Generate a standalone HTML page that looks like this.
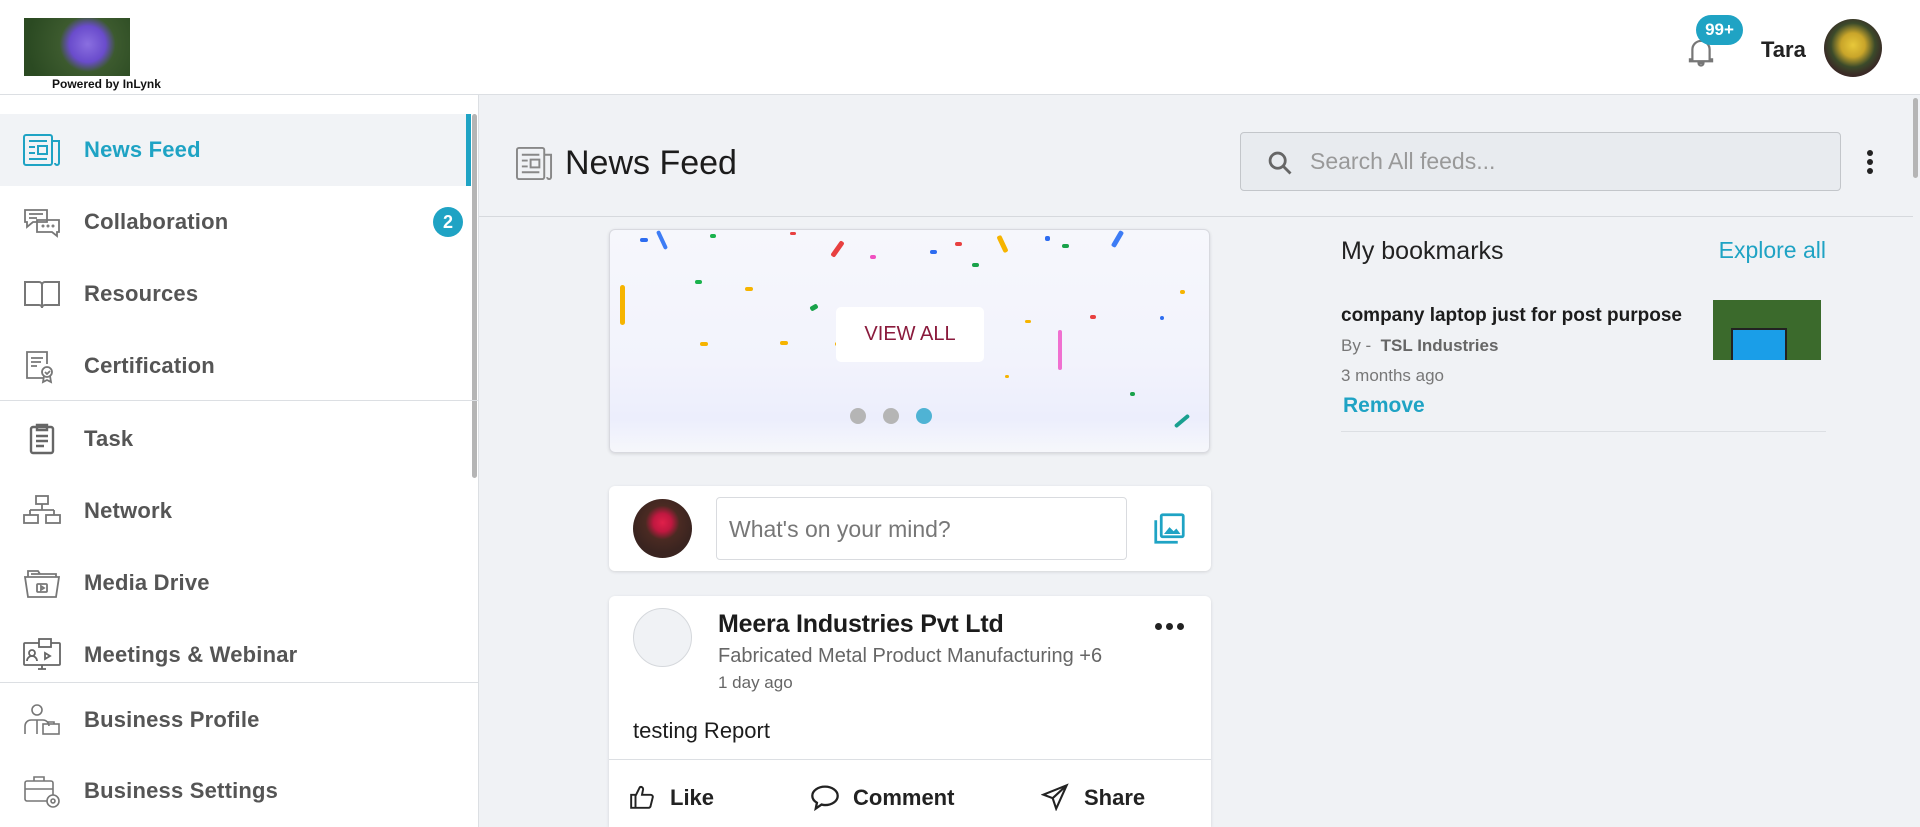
<!DOCTYPE html>
<html style="overflow:hidden;height:827px"><head><meta charset="utf-8"><style>
*{margin:0;padding:0;box-sizing:border-box}
body{width:1920px;height:827px;overflow:hidden;background:#f0f2f5;font-family:"Liberation Sans",sans-serif;position:relative;color:#222}
.a{position:absolute}
#hdr{left:0;top:0;width:1920px;height:95px;background:#fff;border-bottom:1px solid #dcdfe3}
#side{left:0;top:95px;width:479px;height:732px;background:#fff;border-right:1px solid #dcdfe3}
.item{position:absolute;left:0;width:470px;height:72px;display:flex;align-items:center}
.item .ic{position:absolute;left:23px;top:18px;width:38px;height:36px}
.item span{position:absolute;left:84px;font-size:22px;color:#555;font-weight:bold;letter-spacing:.2px}
.card{position:absolute;background:#fff;border-radius:6px;box-shadow:0 1px 3px rgba(0,0,0,.12)}
.conf{position:absolute;border-radius:2px}
</style></head><body>
<div id="hdr" class="a">
  <div class="a" style="left:24px;top:18px;width:106px;height:58px;background:radial-gradient(circle at 60% 45%,#8a6fe0 0,#6a4ccc 18px,#3c5a2e 28px,#2b4a22 60px)"></div>
  <div class="a" style="left:52px;top:77px;font-size:12px;font-weight:bold;color:#111">Powered by InLynk</div>
  <svg class="a" style="left:1686px;top:36px" width="30" height="32" viewBox="0 0 24 26"><path d="M5 19V11a7 7 0 0 1 14 0v8h2v1.5H3V19zM10 22h4a2 2 0 0 1-4 0z" fill="none" stroke="#777" stroke-width="1.8"/></svg>
  <div class="a" style="left:1696px;top:15px;width:47px;height:30px;border-radius:15px;background:#1fa3c4;color:#fff;font-size:17px;text-align:center;line-height:30px;font-weight:bold">99+</div>
  <div class="a" style="left:1761px;top:37px;font-size:22px;font-weight:bold;color:#222">Tara</div>
  <div class="a" style="left:1824px;top:19px;width:58px;height:58px;border-radius:50%;background:radial-gradient(circle at 50% 45%,#e8c83a 0,#c9a52a 12px,#3b4a2a 22px,#3a2a26 30px)"></div>
</div>
<div id="side" class="a">
  <div class="a" style="left:472px;top:19px;width:5px;height:364px;background:#b5b5b5;border-radius:3px"></div>
</div>
<div class="item" style="top:114px;background:#f1f3f6"><svg class="ic" viewBox="0 0 38 36" fill="none" stroke="#1fa3c4" stroke-width="2"><rect x="1" y="3" width="28" height="30" rx="2"/><path d="M29 9h7v22a2 2 0 0 1-4 0M6 9h18M6 15h6M6 21h6M6 27h18"/><rect x="15" y="14" width="9" height="8"/></svg><span style="color:#1fa3c4">News Feed</span><div class="a" style="left:466px;top:0;width:5px;height:72px;background:#1fa3c4"></div></div>
<div class="item" style="top:186px"><svg class="ic" viewBox="0 0 38 36" fill="none" stroke="#777" stroke-width="1.8"><path d="M2 6h22v12H10l-6 5v-5H2z"/><path d="M14 16h22v12h-2v4l-5-4H14z"/><path d="M6 10h14M6 14h8"/><circle cx="20" cy="22" r=".6"/><circle cx="25" cy="22" r=".6"/><circle cx="30" cy="22" r=".6"/></svg><span>Collaboration</span><div class="a" style="left:433px;top:21px;width:30px;height:30px;border-radius:50%;background:#1fa3c4;color:#fff;font-size:18px;text-align:center;line-height:30px;font-weight:bold">2</div></div>
<div class="item" style="top:258px"><svg class="ic" viewBox="0 0 38 36" fill="none" stroke="#777" stroke-width="2"><path d="M2 6h14a3 3 0 0 1 3 3v23a3 3 0 0 0-3-3H2zM36 6H22a3 3 0 0 0-3 3v23a3 3 0 0 1 3-3h14z"/></svg><span>Resources</span></div>
<div class="item" style="top:330px"><svg class="ic" viewBox="0 0 38 36" fill="none" stroke="#777" stroke-width="1.8"><path d="M20 30H4V4h20v12"/><path d="M8 10h12M8 14h10M8 18h6"/><circle cx="24" cy="24" r="5"/><path d="M21 28l-1 6 4-2 4 2-1-6M22 24l2 2 3-3"/></svg><span>Certification</span></div>
<div class="a" style="left:0;top:400px;width:479px;height:1px;background:#dcdfe3"></div>
<div class="item" style="top:403px"><svg class="ic" viewBox="0 0 38 36" fill="none" stroke="#666" stroke-width="2.4"><rect x="8" y="6" width="22" height="26" rx="2"/><path d="M14 4h10v5H14zM13 15h12M13 20h12M13 25h8"/></svg><span>Task</span></div>
<div class="item" style="top:475px"><svg class="ic" viewBox="0 0 38 36" fill="none" stroke="#777" stroke-width="1.8"><rect x="13" y="3" width="12" height="8"/><path d="M19 11v6M7 17h24M7 17v5M31 17v5"/><rect x="1" y="22" width="14" height="8"/><rect x="23" y="22" width="14" height="8"/></svg><span>Network</span></div>
<div class="item" style="top:547px"><svg class="ic" viewBox="0 0 38 36" fill="none" stroke="#777" stroke-width="1.8"><path d="M2 12h34l-3 20H5z"/><path d="M5 12V6h10l2 3h16v3M8 9h22"/><rect x="14" y="19" width="10" height="8" rx="1"/><path d="M18 21v4l3-2z"/></svg><span>Media Drive</span></div>
<div class="item" style="top:619px"><svg class="ic" viewBox="0 0 38 36" fill="none" stroke="#666" stroke-width="1.8"><rect x="1" y="6" width="36" height="22" rx="1"/><path d="M15 32h8M19 28v4"/><rect x="16" y="2" width="12" height="8" fill="#fff"/><circle cx="9" cy="16" r="3"/><path d="M4 24a5 5 0 0 1 10 0M22 16v6l5-3z"/></svg><span>Meetings &amp; Webinar</span></div>
<div class="a" style="left:0;top:682px;width:479px;height:1px;background:#dcdfe3"></div>
<div class="item" style="top:684px"><svg class="ic" viewBox="0 0 38 36" fill="none" stroke="#777" stroke-width="1.6"><circle cx="14" cy="8" r="5"/><path d="M2 32V24a6 6 0 0 1 6-6h12a6 6 0 0 1 6 6M14 18v14"/><rect x="20" y="22" width="16" height="10"/><path d="M25 22v-2h6v2"/></svg><span>Business Profile</span></div>
<div class="item" style="top:755px"><svg class="ic" viewBox="0 0 38 36" fill="none" stroke="#777" stroke-width="1.6"><rect x="2" y="8" width="28" height="20" rx="2"/><path d="M11 8V4h10v4M2 16h28"/><circle cx="30" cy="28" r="6" fill="#fff"/><circle cx="30" cy="28" r="2"/></svg><span>Business Settings</span></div>

<svg class="a" style="left:516px;top:145px" width="37" height="37" viewBox="0 0 38 36" fill="none" stroke="#888" stroke-width="2"><rect x="1" y="2" width="28" height="32" rx="2"/><path d="M29 9h7v23a2 2 0 0 1-4 0M6 9h18M6 15h6M6 21h6M6 27h18"/><rect x="15" y="14" width="9" height="8"/></svg>
<div class="a" style="left:565px;top:144px;font-size:34px;color:#1c1c1c">News Feed</div>
<div class="a" style="left:1240px;top:132px;width:601px;height:59px;background:#e8ebef;border:1px solid #c3c6ca;border-radius:4px"></div>
<svg class="a" style="left:1266px;top:149px" width="28" height="28" viewBox="0 0 24 24" fill="none" stroke="#666" stroke-width="2.4"><circle cx="10" cy="10" r="6.5"/><path d="M15 15l6 6"/></svg>
<div class="a" style="left:1310px;top:148px;font-size:23px;color:#999">Search All feeds...</div>
<div class="a" style="left:1867px;top:150px;width:6px;height:6px;border-radius:50%;background:#222;box-shadow:0 9px 0 #222,0 18px 0 #222"></div>
<div class="a" style="left:479px;top:216px;width:1434px;height:1px;background:#d6d9dd"></div>
<div class="a" style="left:1913px;top:98px;width:5px;height:80px;background:#b5b5b5;border-radius:3px"></div>

<div class="card" style="left:609px;top:229px;width:601px;height:224px;overflow:hidden;background:linear-gradient(#f6f7fc 0,#f2f3fc 60%,#eceefc 85%,#f6f7fb 100%);border:1px solid #d8d9df">
  <div class="conf" style="left:30px;top:8px;width:8px;height:4px;background:#2d6cf0"></div>
  <div class="conf" style="left:50px;top:0;width:4px;height:20px;background:#3d7cf5;transform:rotate(-25deg)"></div>
  <div class="conf" style="left:85px;top:50px;width:7px;height:4px;background:#1ab24c"></div>
  <div class="conf" style="left:100px;top:4px;width:6px;height:4px;background:#1ab24c"></div>
  <div class="conf" style="left:135px;top:57px;width:8px;height:4px;background:#f6b400"></div>
  <div class="conf" style="left:170px;top:111px;width:8px;height:4px;background:#f6b400"></div>
  <div class="conf" style="left:200px;top:75px;width:8px;height:5px;background:#19a24a;transform:rotate(-30deg)"></div>
  <div class="conf" style="left:10px;top:55px;width:5px;height:40px;background:#f6b400;border-radius:3px"></div>
  <div class="conf" style="left:225px;top:112px;width:8px;height:4px;background:#f6b400"></div>
  <div class="conf" style="left:90px;top:112px;width:8px;height:4px;background:#f6b400"></div>
  <div class="conf" style="left:180px;top:2px;width:6px;height:3px;background:#e84040"></div>
  <div class="conf" style="left:225px;top:10px;width:5px;height:18px;background:#e84040;transform:rotate(35deg)"></div>
  <div class="conf" style="left:260px;top:25px;width:6px;height:4px;background:#f050c0"></div>
  <div class="conf" style="left:320px;top:20px;width:7px;height:4px;background:#2d6cf0"></div>
  <div class="conf" style="left:345px;top:12px;width:7px;height:4px;background:#e84040"></div>
  <div class="conf" style="left:362px;top:33px;width:7px;height:4px;background:#19a24a"></div>
  <div class="conf" style="left:390px;top:5px;width:5px;height:18px;background:#f6b400;transform:rotate(-25deg)"></div>
  <div class="conf" style="left:435px;top:6px;width:5px;height:5px;background:#2d6cf0"></div>
  <div class="conf" style="left:452px;top:14px;width:7px;height:4px;background:#19a24a"></div>
  <div class="conf" style="left:505px;top:0;width:5px;height:18px;background:#3d7cf5;transform:rotate(30deg)"></div>
  <div class="conf" style="left:335px;top:115px;width:7px;height:4px;background:#e84040"></div>
  <div class="conf" style="left:415px;top:90px;width:6px;height:3px;background:#f6b400"></div>
  <div class="conf" style="left:480px;top:85px;width:6px;height:4px;background:#e84040"></div>
  <div class="conf" style="left:570px;top:60px;width:5px;height:4px;background:#f6b400"></div>
  <div class="conf" style="left:550px;top:86px;width:4px;height:4px;background:#2d6cf0"></div>
  <div class="conf" style="left:448px;top:100px;width:4px;height:40px;background:#f070d0;border-radius:3px"></div>
  <div class="conf" style="left:570px;top:182px;width:4px;height:18px;background:#1aa090;transform:rotate(50deg)"></div>
  <div class="conf" style="left:395px;top:145px;width:4px;height:3px;background:#f6b400"></div>
  <div class="conf" style="left:520px;top:162px;width:5px;height:4px;background:#19a24a"></div>
  <div class="a" style="left:226px;top:77px;width:148px;height:55px;background:#fff;border-radius:5px;color:#8a1a3c;font-size:20px;text-align:center;line-height:55px">VIEW ALL</div>
  <div class="a" style="left:240px;top:178px;width:16px;height:16px;border-radius:50%;background:#b5b5b5"></div>
  <div class="a" style="left:273px;top:178px;width:16px;height:16px;border-radius:50%;background:#b5b5b5"></div>
  <div class="a" style="left:306px;top:178px;width:16px;height:16px;border-radius:50%;background:#4fb3d4"></div>
</div>

<div class="card" style="left:609px;top:486px;width:602px;height:85px">
  <div class="a" style="left:24px;top:13px;width:59px;height:59px;border-radius:50%;background:radial-gradient(circle at 50% 40%,#e0204a 0,#c01840 9px,#4a2a22 17px,#3a2420 30px)"></div>
  <div class="a" style="left:107px;top:11px;width:411px;height:63px;border:1px solid #d9dbdf;border-radius:4px;font-size:23px;color:#777;padding:18px 0 0 12px">What's on your mind?</div>
  <svg class="a" style="left:544px;top:26px" width="33" height="33" viewBox="0 0 24 24" fill="none" stroke="#1fa3c4" stroke-width="2"><rect x="6" y="2" width="16" height="16" rx="1"/><path d="M2 6v16h16"/><path d="M8 16l4-5 3 3 2-2 3 4z" fill="#1fa3c4" stroke="none"/></svg>
</div>

<div class="card" style="left:609px;top:596px;width:602px;height:231px;border-radius:6px 6px 0 0">
  <div class="a" style="left:24px;top:12px;width:59px;height:59px;border-radius:50%;background:#f0f2f5;border:1px solid #d5d8dc"></div>
  <div class="a" style="left:109px;top:14px;font-size:25px;color:#1c1c1c;font-weight:bold;letter-spacing:-.2px">Meera Industries Pvt Ltd</div>
  <div class="a" style="left:109px;top:49px;font-size:20px;color:#666">Fabricated Metal Product Manufacturing +6</div>
  <div class="a" style="left:109px;top:77px;font-size:17px;color:#666">1 day ago</div>
  <div class="a" style="left:546px;top:27px;width:7px;height:7px;border-radius:50%;background:#222;box-shadow:11px 0 0 #222,22px 0 0 #222"></div>
  <div class="a" style="left:24px;top:122px;font-size:22px;color:#1c1c1c">testing Report</div>
  <div class="a" style="left:0;top:163px;width:602px;height:1px;background:#dcdfe3"></div>
  <svg class="a" style="left:20px;top:188px" width="26" height="26" viewBox="0 0 24 24" fill="none" stroke="#222" stroke-width="1.8"><path d="M2 10h4v12H2zM6 11l4-8a2 2 0 0 1 3 2l-1 5h8a2 2 0 0 1 2 2l-2 8a2 2 0 0 1-2 2H6"/></svg>
  <div class="a" style="left:61px;top:189px;font-size:22px;font-weight:bold;color:#222">Like</div>
  <svg class="a" style="left:201px;top:187px" width="30" height="28" viewBox="0 0 26 24" fill="none" stroke="#222" stroke-width="2"><path d="M13 3C7 3 2 6.5 2 11c0 2.5 1.5 4.5 4 6l-1 5 5-3.5c1 .3 2 .5 3 .5 6 0 11-3.5 11-8S19 3 13 3z"/></svg>
  <div class="a" style="left:244px;top:189px;font-size:22px;font-weight:bold;color:#222">Comment</div>
  <svg class="a" style="left:432px;top:187px" width="28" height="28" viewBox="0 0 24 24" fill="none" stroke="#222" stroke-width="1.8"><path d="M22 2L2 10l8 3 3 9zM10 13l12-11"/></svg>
  <div class="a" style="left:475px;top:189px;font-size:22px;font-weight:bold;color:#222">Share</div>
</div>

<div class="a" style="left:1341px;top:237px;font-size:25px;color:#222">My bookmarks</div>
<div class="a" style="left:1718px;top:237px;width:108px;text-align:right;font-size:23px;color:#1fa3c4">Explore all</div>
<div class="a" style="left:1341px;top:305px;font-size:19px;font-weight:bold;color:#1c1c1c">company laptop just for post purpose</div>
<div class="a" style="left:1341px;top:336px;font-size:17px;color:#777">By - &nbsp;<b style="color:#666">TSL Industries</b></div>
<div class="a" style="left:1341px;top:366px;font-size:17px;color:#777">3 months ago</div>
<div class="a" style="left:1343px;top:394px;font-size:21px;color:#1fa3c4;font-weight:bold">Remove</div>
<div class="a" style="left:1713px;top:300px;width:108px;height:60px;background:#3b6a2c;overflow:hidden"><div class="a" style="left:18px;top:28px;width:56px;height:34px;background:#1a9ee8;border:2px solid #222"></div></div>
<div class="a" style="left:1341px;top:431px;width:485px;height:1px;background:#dcdfe3"></div>
</body></html>
